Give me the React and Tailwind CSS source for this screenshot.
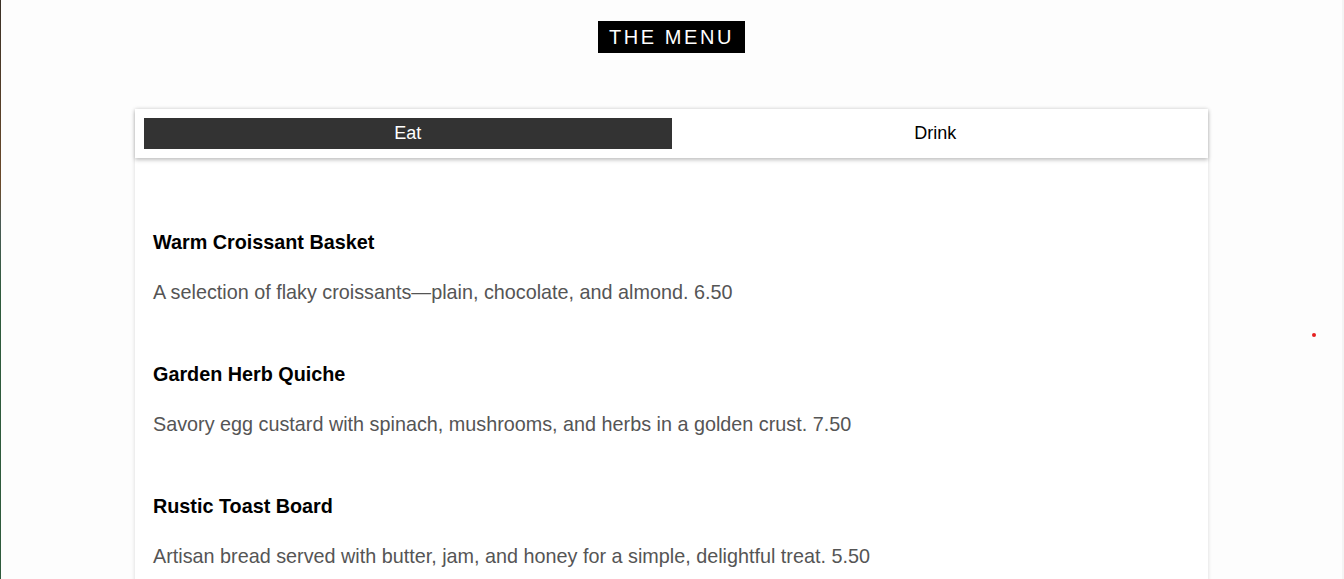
import { useState } from "react";

const items = {
  Eat: [
    {
      name: "Warm Croissant Basket",
      desc: "A selection of flaky croissants\u2014plain, chocolate, and almond. 6.50",
    },
    {
      name: "Garden Herb Quiche",
      desc: "Savory egg custard with spinach, mushrooms, and herbs in a golden crust. 7.50",
    },
    {
      name: "Rustic Toast Board",
      desc: "Artisan bread served with butter, jam, and honey for a simple, delightful treat. 5.50",
    },
    {
      name: "Seasonal Fruit Bowl",
      desc: "Fresh cut fruit of the season with a drizzle of honey and mint. 6.00",
    },
  ],
  Drink: [
    { name: "House Coffee", desc: "Freshly brewed, rich and smooth. 3.00" },
    { name: "Cappuccino", desc: "Espresso with steamed milk and foam. 4.50" },
    { name: "Fresh Orange Juice", desc: "Squeezed to order. 4.00" },
  ],
};

export default function App() {
  const [tab, setTab] = useState("Eat");

  return (
    <div className="flex min-h-screen bg-[#fdfdfd] font-['Liberation_Sans',Arial,sans-serif]">
      <div className="w-[1px] shrink-0 bg-[linear-gradient(to_bottom,#3a3026_0%,#6b4a2a_25%,#4a5a55_30%,#2f5a3c_40%,#2f5a3c_100%)]" />
      <div className="relative flex-1">
        <div className="flex justify-center pt-[21px]">
          <h1 className="bg-black px-[11px] text-[20px] leading-[32px] tracking-[2.6px] text-white">
            THE MENU
          </h1>
        </div>

        <div className="mx-auto mt-[56px] w-[1073px] bg-white shadow-[0_0_4px_rgba(0,0,0,0.15)]">
          <div className="flex p-[9px] shadow-[0_2px_4px_rgba(0,0,0,0.25)]">
            {["Eat", "Drink"].map((t) => (
              <button
                key={t}
                onClick={() => setTab(t)}
                className={
                  tab === t
                    ? "h-[31px] flex-1 bg-[#333333] text-[18px] text-white"
                    : "h-[31px] flex-1 bg-white text-[18px] text-black"
                }
              >
                {t}
              </button>
            ))}
          </div>

          <div className="flex flex-col gap-[58px] px-[18px] pt-[72px] pb-10">
            {items[tab].map((item) => (
              <div key={item.name}>
                <h3 className="text-[19.8px] font-bold leading-6 text-black">{item.name}</h3>
                <p className="mt-[26px] text-[19.8px] leading-6 text-[#555555]">{item.desc}</p>
              </div>
            ))}
          </div>
        </div>

        <span className="absolute left-[1311px] top-[333px] h-[4px] w-[4px] rounded-full bg-[#e52020]" />
      </div>
      <div className="w-[2px] shrink-0 bg-[#f4f4f4]" />
    </div>
  );
}
